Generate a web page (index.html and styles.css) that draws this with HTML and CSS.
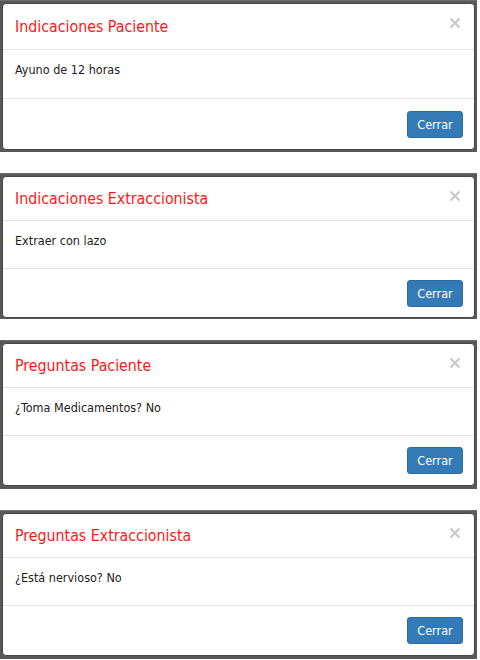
FILE: index.html
```html
<!DOCTYPE html>
<html lang="es">
  <head>
    <meta charset="UTF-8" />
    <meta name="viewport" content="width=device-width, initial-scale=1.0" />
    <title>Indicaciones</title>
    <link rel="stylesheet" href="styles.css">
  </head>
  <body>
    <div class="shot first">
      <div class="modal">
        <div class="modal-header">
          <h4>Indicaciones Paciente</h4>
          <span class="close">
            <svg width="12" height="12" viewBox="0 0 12 12"><path d="M1.5 1.5 L10.5 10.5 M10.5 1.5 L1.5 10.5" /></svg>
          </span>
        </div>
        <div class="modal-body">Ayuno de 12 horas</div>
        <div class="modal-footer"><button>Cerrar</button></div>
      </div>
    </div>

    <div class="shot second">
      <div class="modal">
        <div class="modal-header">
          <h4>Indicaciones Extraccionista</h4>
          <span class="close">
            <svg width="12" height="12" viewBox="0 0 12 12"><path d="M1.5 1.5 L10.5 10.5 M10.5 1.5 L1.5 10.5" /></svg>
          </span>
        </div>
        <div class="modal-body">Extraer con lazo</div>
        <div class="modal-footer"><button>Cerrar</button></div>
      </div>
    </div>

    <div class="shot">
      <div class="modal">
        <div class="modal-header">
          <h4>Preguntas Paciente</h4>
          <span class="close">
            <svg width="12" height="12" viewBox="0 0 12 12"><path d="M1.5 1.5 L10.5 10.5 M10.5 1.5 L1.5 10.5" /></svg>
          </span>
        </div>
        <div class="modal-body">¿Toma Medicamentos? No</div>
        <div class="modal-footer"><button>Cerrar</button></div>
      </div>
    </div>

    <div class="shot">
      <div class="modal">
        <div class="modal-header">
          <h4>Preguntas Extraccionista</h4>
          <span class="close">
            <svg width="12" height="12" viewBox="0 0 12 12"><path d="M1.5 1.5 L10.5 10.5 M10.5 1.5 L1.5 10.5" /></svg>
          </span>
        </div>
        <div class="modal-body">¿Está nervioso? No</div>
        <div class="modal-footer"><button>Cerrar</button></div>
      </div>
    </div>
  </body>
</html>
```

FILE: styles.css
```css
* {
  padding: 0;
  margin: 0;
  box-sizing: border-box;
}
body {
  background: #fff;
  font-family: "DejaVu Sans Condensed", "DejaVu Sans", Verdana, sans-serif;
  color: #222;
  width: 480px;
}
.shot {
  width: 477px;
  margin-top: 21px;
  padding: 2px 2px 3px 2px;
  background: #585858;
  border-top: 1px solid #6e6e6e;
}
.shot.first {
  margin-top: 0;
  padding-top: 2px;
  padding-bottom: 2px;
}
.shot.second {
  padding-top: 2px;
  padding-bottom: 1px;
}
.modal {
  background: #fff;
  border: 1px solid #454545;
  border-radius: 4px;
}
.modal-header {
  height: 44px;
  padding: 0 12px;
  display: flex;
  align-items: center;
  justify-content: space-between;
  border-bottom: 1px solid #e5e5e5;
}
.modal-header h4 {
  font-weight: normal;
  font-size: 15.8px;
  color: #ff1616;
}
.close {
  align-self: flex-start;
  margin-top: 13px;
  margin-right: 1px;
  line-height: 0;
}
.close path {
  stroke: #c6c6c6;
  stroke-width: 2;
  fill: none;
}
.modal-body {
  height: 48px;
  padding: 11px 12px;
  font-size: 12.5px;
  line-height: 18px;
  border-bottom: 1px solid #e5e5e5;
}
.modal-footer {
  height: 49px;
  padding: 11px 11px;
  display: flex;
  justify-content: flex-end;
}
.first .modal-header {
  height: 46px;
}
.first .modal-body {
  height: 49px;
}
.first .modal-footer {
  height: 50px;
  padding-top: 12px;
}
.second .modal-footer {
  height: 48px;
}
.modal-footer button {
  width: 56px;
  height: 27px;
  border: 1px solid #2e6da4;
  border-radius: 3px;
  background: #337ab7;
  color: #fff;
  font-family: "DejaVu Sans Condensed", "DejaVu Sans", Verdana, sans-serif;
  font-size: 12.5px;
}
```
